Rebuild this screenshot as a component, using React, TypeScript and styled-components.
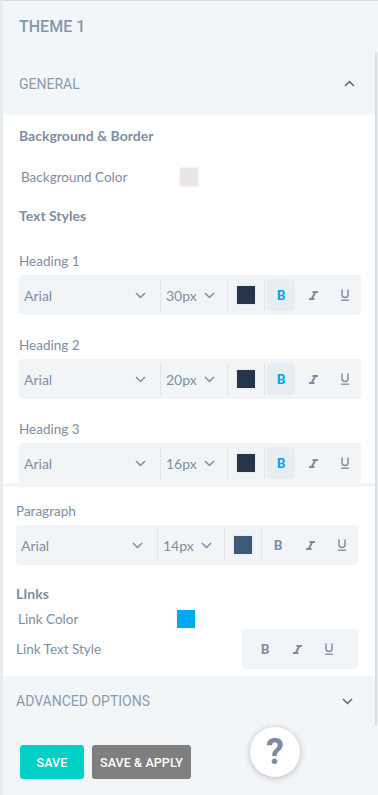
import React from 'react';
import styled, { createGlobalStyle } from 'styled-components';

const muted = '#7d8ea3';

const GlobalStyle = createGlobalStyle`
  html, body {
    margin: 0;
    padding: 0;
    background: #f3f6f8;
  }
  body {
    font-family: Lato, 'Noto Sans', sans-serif;
  }
  * {
    box-sizing: border-box;
  }
`;

const Page = styled.div`
  position: relative;
  width: 378px;
  height: 795px;
  background: #f3f6f8;
  border-left: 3px solid #e6ebef;
  border-top: 1px solid #d4dce2;
  overflow: hidden;
`;

const Title = styled.div`
  height: 51px;
  padding-left: 16px;
  display: flex;
  align-items: center;
  font-family: Roboto, sans-serif;
  font-weight: 500;
  font-size: 16px;
  color: #8596ab;
`;

const ScrollArea = styled.div`
  width: 374px;
  border-right: 2px solid #d6dde3;
`;

interface HeaderProps {
  $height: number;
  $left: number;
  $right: number;
}

const SectionHeader = styled.div<HeaderProps>`
  height: ${({ $height }) => $height}px;
  padding: 0 ${({ $right }) => $right}px 0 ${({ $left }) => $left}px;
  display: flex;
  align-items: center;
  justify-content: space-between;
  font-family: Roboto, sans-serif;
  font-size: 14px;
  color: #8a9bb0;
  text-transform: uppercase;
`;

interface PanelProps {
  $left: number;
  $right: number;
  $top: number;
  $bottom: number;
}

const Panel = styled.div<PanelProps>`
  background: #fff;
  padding: ${({ $top, $right, $bottom, $left }) => `${$top}px ${$right}px ${$bottom}px ${$left}px`};
  & + & {
    margin-top: 4px;
  }
`;

const GroupTitle = styled.div<{ $mt?: number }>`
  margin-top: ${({ $mt = 0 }) => $mt}px;
  font-size: 14px;
  line-height: 16px;
  font-weight: 700;
  color: ${muted};
`;

const FieldRow = styled.div<{ $mt: number }>`
  display: flex;
  align-items: center;
  justify-content: space-between;
  margin-top: ${({ $mt }) => $mt}px;
`;

const SwatchRow = styled.div<{ $mt: number }>`
  display: flex;
  align-items: center;
  margin-top: ${({ $mt }) => $mt}px;
`;

const FieldLabel = styled.div<{ $indent?: number }>`
  width: 161px;
  padding-left: ${({ $indent = 0 }) => $indent}px;
  font-size: 13.5px;
  line-height: 16px;
  color: ${muted};
`;

const Swatch = styled.span<{ $color: string }>`
  display: block;
  width: 18px;
  height: 18px;
  background: ${({ $color }) => $color};
  box-shadow: 0 0 2px rgba(0, 0, 0, 0.12);
`;

const Blocks = styled.div<{ $mt: number }>`
  display: flex;
  flex-direction: column;
  gap: 22px;
  margin-top: ${({ $mt }) => $mt}px;
`;

const StyleLabel = styled.div`
  font-size: 13.5px;
  line-height: 16px;
  color: ${muted};
  margin-bottom: 6px;
`;

const Toolbar = styled.div`
  display: flex;
  align-items: center;
  height: 40px;
  background: #f2f5f7;
  border-radius: 4px;
`;

const MiniToolbar = styled(Toolbar)`
  padding: 0 15px 0 9px;
  gap: 4px;
`;

const Select = styled.div<{ $width: number; $padRight: number }>`
  width: ${({ $width }) => $width}px;
  height: 100%;
  padding: 0 ${({ $padRight }) => $padRight}px 0 5px;
  display: flex;
  align-items: center;
  justify-content: space-between;
  font-size: 14px;
  color: #7f90a5;
`;

const Divider = styled.span`
  width: 1px;
  height: 32px;
  background: #e0e6eb;
`;

const SwatchCell = styled.div`
  width: 36px;
  display: flex;
  justify-content: center;
`;

const Buttons = styled.div`
  display: flex;
  gap: 4px;
  margin-left: 2px;
`;

const StyleButton = styled.div<{ $active?: boolean }>`
  width: 28px;
  height: 32px;
  border-radius: 4px;
  display: flex;
  align-items: center;
  justify-content: center;
  background: ${({ $active }) => ($active ? '#e8edf1' : 'transparent')};
  color: ${({ $active }) => ($active ? '#00a3ec' : muted)};
  font-size: 13px;
  font-weight: 900;
`;

const Footer = styled.div`
  display: flex;
  gap: 8px;
  padding: 19px 0 0 17px;
`;

const ActionButton = styled.button<{ $bg: string }>`
  min-width: 64px;
  height: 34px;
  padding: 0 8px;
  border: none;
  border-radius: 3px;
  background: ${({ $bg }) => $bg};
  color: #fff;
  font-family: Roboto, sans-serif;
  font-weight: 500;
  font-size: 12.5px;
  letter-spacing: 0.1px;
`;

const HelpButton = styled.div`
  position: absolute;
  left: 247px;
  top: 726px;
  width: 50px;
  height: 50px;
  border-radius: 50%;
  background: #fff;
  box-shadow: 0 1px 6px rgba(0, 0, 0, 0.25);
  display: flex;
  align-items: center;
  justify-content: center;
  font-family: Roboto, sans-serif;
  font-weight: 700;
  font-size: 36px;
  color: #7b8ca2;
`;

const Chevron = ({ up = false, color = muted }: { up?: boolean; color?: string }) => (
  <svg width="11" height="7" viewBox="0 0 11 7" fill="none">
    <polyline
      points={up ? '1,6 5.5,1.5 10,6' : '1,1 5.5,5.5 10,1'}
      stroke={color}
      strokeWidth="1.5"
    />
  </svg>
);

const ItalicIcon = () => (
  <svg width="9" height="9" viewBox="0 0 9 9" fill="none" stroke={muted}>
    <line x1="3.5" y1="1" x2="9" y2="1" strokeWidth="2" />
    <line x1="0" y1="8" x2="5.5" y2="8" strokeWidth="2" />
    <line x1="6.3" y1="1" x2="2.7" y2="8" strokeWidth="2" />
  </svg>
);

const UnderlineIcon = () => (
  <svg width="10" height="12" viewBox="0 0 10 12" fill="none" stroke={muted}>
    <path d="M2 0.5 V5.5 a3 3 0 0 0 6 0 V0.5" strokeWidth="1.5" />
    <line x1="1" y1="11.2" x2="9" y2="11.2" strokeWidth="1.3" />
  </svg>
);

interface StyleRowProps {
  label: string;
  size: string;
  color: string;
  bold?: boolean;
}

function TextStyleRow({ label, size, color, bold = false }: StyleRowProps) {
  return (
    <div>
      <StyleLabel>{label}</StyleLabel>
      <Toolbar>
        <Select $width={141} $padRight={14}>
          Arial
          <Chevron />
        </Select>
        <Divider />
        <Select $width={66} $padRight={12}>
          {size}
          <Chevron />
        </Select>
        <Divider />
        <SwatchCell>
          <Swatch $color={color} />
        </SwatchCell>
        <Divider />
        <Buttons>
          <StyleButton $active={bold}>B</StyleButton>
          <StyleButton>
            <ItalicIcon />
          </StyleButton>
          <StyleButton>
            <UnderlineIcon />
          </StyleButton>
        </Buttons>
      </Toolbar>
    </div>
  );
}

export default function App() {
  return (
    <>
      <GlobalStyle />
      <Page>
        <Title>THEME 1</Title>
        <ScrollArea>
          <SectionHeader $height={63} $left={16} $right={20}>
            General
            <Chevron up color="#5f6368" />
          </SectionHeader>

          <Panel $top={13} $right={14} $bottom={0} $left={16}>
            <GroupTitle>Background &amp; Border</GroupTitle>
            <SwatchRow $mt={24}>
              <FieldLabel $indent={2}>Background Color</FieldLabel>
              <Swatch $color="#ece5e7" />
            </SwatchRow>
            <GroupTitle $mt={22}>Text Styles</GroupTitle>
            <Blocks $mt={29}>
              <TextStyleRow label="Heading 1" size="30px" color="#27354a" bold />
              <TextStyleRow label="Heading 2" size="20px" color="#27354a" bold />
              <TextStyleRow label="Heading 3" size="16px" color="#27354a" bold />
            </Blocks>
          </Panel>

          <Panel $top={16} $right={17} $bottom={7} $left={13}>
            <TextStyleRow label="Paragraph" size="14px" color="#3d5a78" />
            <GroupTitle $mt={21}>LInks</GroupTitle>
            <SwatchRow $mt={8}>
              <FieldLabel $indent={2}>Link Color</FieldLabel>
              <Swatch $color="#00a8f0" />
            </SwatchRow>
            <FieldRow $mt={1}>
              <FieldLabel>Link Text Style</FieldLabel>
              <MiniToolbar>
                <StyleButton>B</StyleButton>
                <StyleButton>
                  <ItalicIcon />
                </StyleButton>
                <StyleButton>
                  <UnderlineIcon />
                </StyleButton>
              </MiniToolbar>
            </FieldRow>
          </Panel>

          <SectionHeader $height={50} $left={13} $right={22}>
            Advanced Options
            <Chevron color="#5f6368" />
          </SectionHeader>
        </ScrollArea>

        <Footer>
          <ActionButton $bg="#00d0c6">SAVE</ActionButton>
          <ActionButton $bg="#7f7f7f">SAVE &amp; APPLY</ActionButton>
        </Footer>
        <HelpButton>?</HelpButton>
      </Page>
    </>
  );
}
